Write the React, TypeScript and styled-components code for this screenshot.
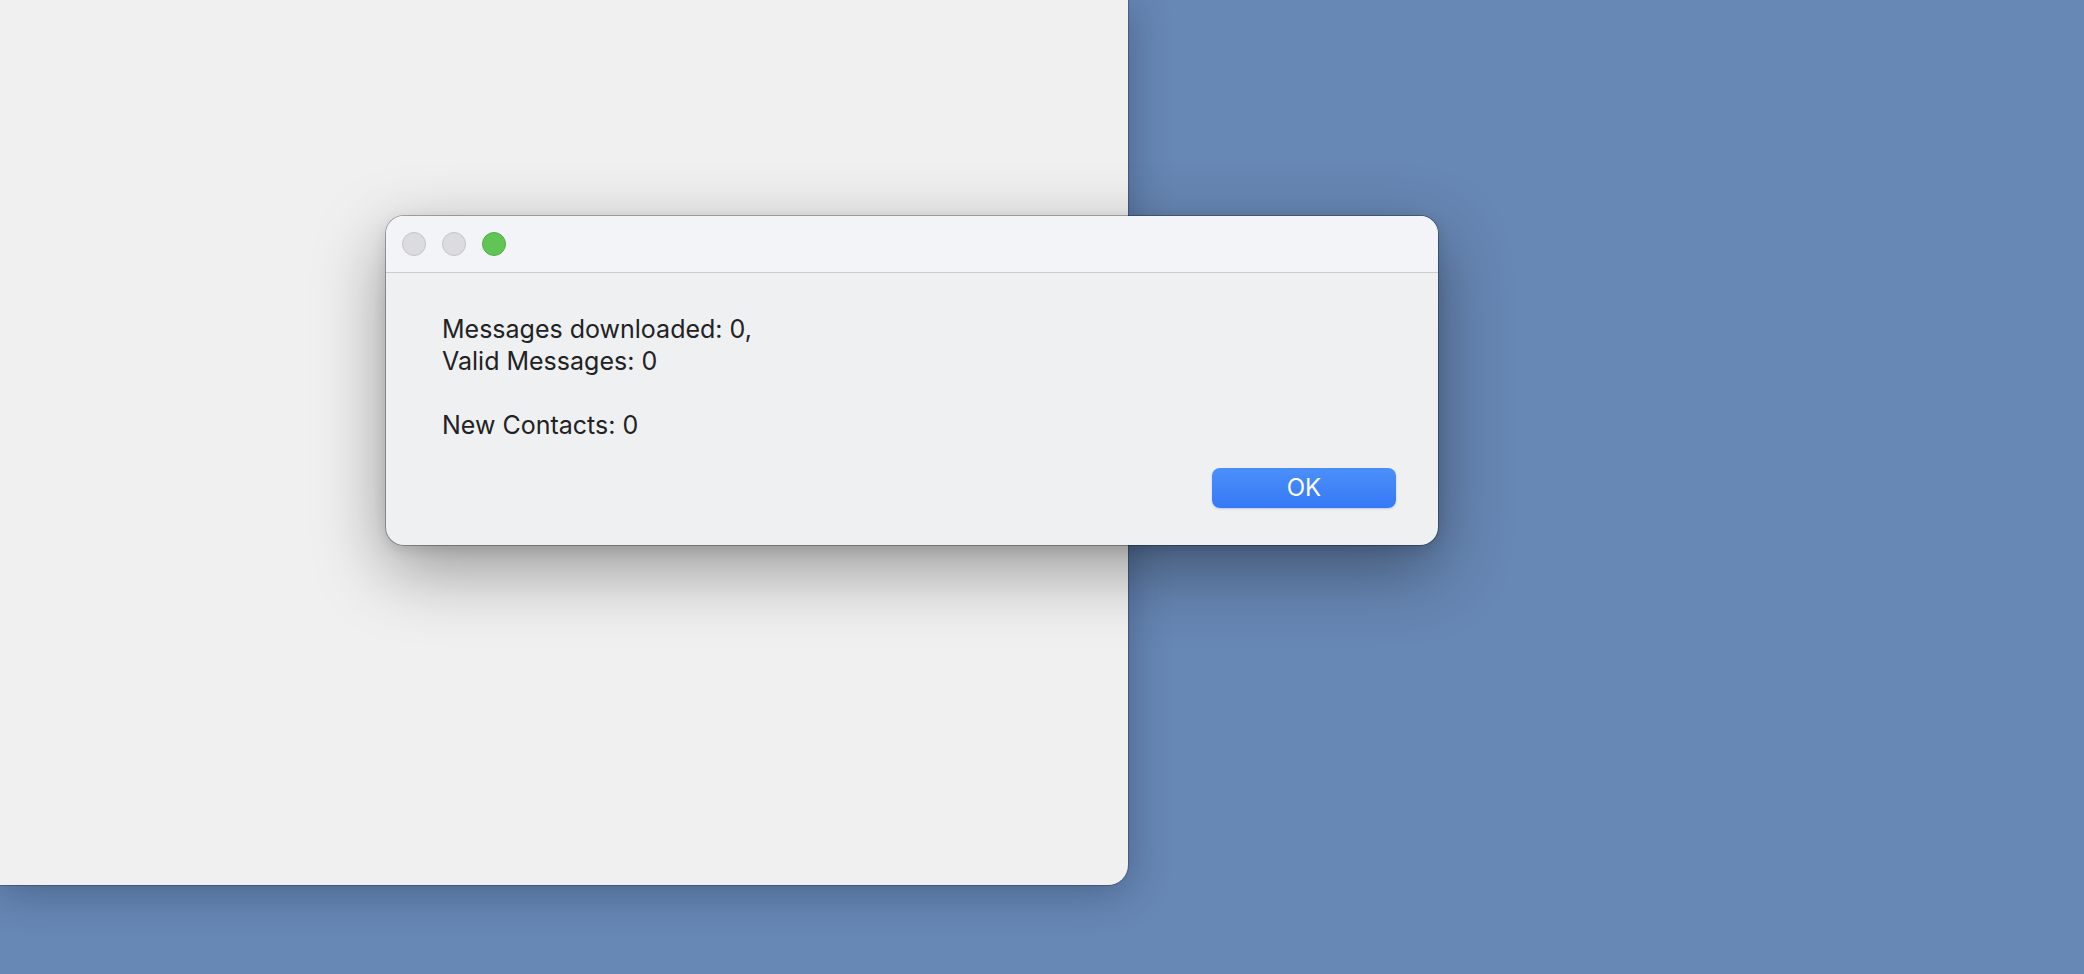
import React from 'react';
import styled, { createGlobalStyle } from 'styled-components';

const GlobalStyle = createGlobalStyle`
  html, body {
    margin: 0;
    padding: 0;
    width: 100%;
    height: 100%;
    overflow: hidden;
  }
  body {
    font-family: Inter, "Noto Sans", "Liberation Sans", sans-serif;
    -webkit-font-smoothing: antialiased;
  }
`;

const Desktop = styled.div`
  position: relative;
  width: 2084px;
  height: 974px;
  background: #6787b4;
  overflow: hidden;
`;

const BackWindow = styled.div`
  position: absolute;
  left: 0;
  top: 0;
  width: 1128px;
  height: 885px;
  background: #f0f0f0;
  border-bottom-right-radius: 20px;
  box-shadow: 0 0 0 1px rgba(0, 0, 0, 0.22), 0 6px 40px rgba(20, 30, 60, 0.35);
`;

const Dialog = styled.div`
  position: absolute;
  left: 386px;
  top: 216px;
  width: 1052px;
  height: 329px;
  display: flex;
  flex-direction: column;
  background: #eff0f2;
  border-radius: 18px;
  overflow: hidden;
  box-shadow: 0 0 0 1px rgba(0, 0, 0, 0.28), 0 24px 70px rgba(0, 0, 0, 0.38),
    0 4px 14px rgba(0, 0, 0, 0.12);
`;

const TitleBar = styled.div`
  height: 56px;
  flex-shrink: 0;
  display: flex;
  align-items: center;
  gap: 16px;
  padding-left: 16px;
  background: #f3f4f8;
  border-bottom: 1px solid #cdcdd0;
`;

const Light = styled.span<{ color: string; ring: string }>`
  width: 24px;
  height: 24px;
  box-sizing: border-box;
  border-radius: 50%;
  background: ${({ color }) => color};
  border: 1px solid ${({ ring }) => ring};
`;

const Body = styled.div`
  flex: 1;
  display: flex;
  flex-direction: column;
  padding: 40px 42px 37px 56px;
`;

const Message = styled.div`
  font-size: 25px;
  line-height: 32px;
  color: #222224;
  white-space: pre-line;
`;

const ButtonRow = styled.div`
  display: flex;
  justify-content: flex-end;
  margin-top: auto;
`;

const OkButton = styled.button`
  width: 184px;
  height: 40px;
  border: none;
  border-radius: 8px;
  background: linear-gradient(#4b90f9, #3578f6);
  box-shadow: 0 1px 2px rgba(40, 90, 200, 0.25);
  color: #fff;
  font-family: Inter, "Noto Sans", "Liberation Sans", sans-serif;
  font-size: 24px;
  line-height: 40px;
  padding: 0;
`;

export default function App() {
  return (
    <>
      <GlobalStyle />
      <Desktop>
        <BackWindow />
        <Dialog>
          <TitleBar>
            <Light color="#dcdce0" ring="#c4c4c8" />
            <Light color="#dcdce0" ring="#c4c4c8" />
            <Light color="#61c555" ring="#52ad47" />
          </TitleBar>
          <Body>
            <Message>{'Messages downloaded: 0,\nValid Messages: 0\n\nNew Contacts: 0'}</Message>
            <ButtonRow>
              <OkButton>OK</OkButton>
            </ButtonRow>
          </Body>
        </Dialog>
      </Desktop>
    </>
  );
}
